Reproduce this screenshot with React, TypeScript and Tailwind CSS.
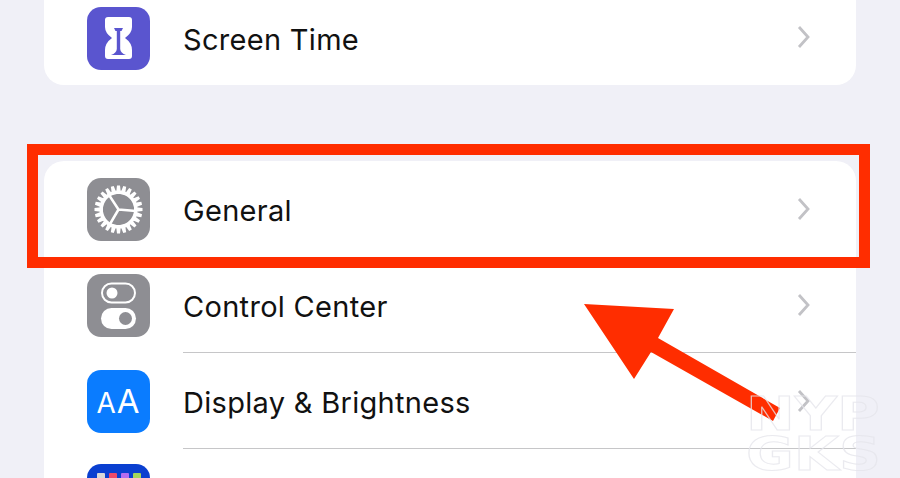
import React from "react";

function HourglassIcon() {
  return (
    <svg width="63" height="63" viewBox="0 0 63 63">
      <path d="M18 13 Q18 10 21 10 H42 Q45 10 45 13 V20 Q45 26 38 31 Q45 36 45 43 V49 Q45 52 42 52 H21 Q18 52 18 49 V43 Q18 36 25 31 Q18 26 18 20 Z" fill="#fff" />
      <path d="M27 21 H36 L34.5 24 H33.2 L33.2 42 Q33.5 46 39 48 H24 Q29.5 46 29.8 42 L29.8 24 H28.5 Z" fill="#5a55cf" />
    </svg>
  );
}

function GearIcon() {
  const teeth = Array.from({ length: 24 }, (_, i) => i * 15);
  return (
    <svg width="63" height="63" viewBox="0 0 63 63">
      {teeth.map((deg) => (
        <polygon key={deg} points="29,16 34,16 33,7.5 30,7.5" fill="#fff" transform={`rotate(${deg} 31.5 31.5)`} />
      ))}
      <circle cx="31.5" cy="31.5" r="17.5" fill="none" stroke="#fff" strokeWidth="3" />
      <path d="M31.5 31.5 L49 33 M31.5 31.5 L22 17 M31.5 31.5 L23 46" stroke="#fff" strokeWidth="2.5" fill="none" />
    </svg>
  );
}

function SwitchesIcon() {
  return (
    <svg width="63" height="63" viewBox="0 0 63 63">
      <rect x="15" y="9.5" width="33" height="19" rx="9.5" fill="none" stroke="#fff" strokeWidth="2" />
      <circle cx="25" cy="19" r="5.5" fill="#fff" />
      <rect x="14" y="34" width="35" height="21" rx="10.5" fill="#fff" />
      <circle cx="38.5" cy="44.5" r="6.5" fill="#8e8e93" />
    </svg>
  );
}

function Chevron() {
  return (
    <svg width="13" height="24" viewBox="0 0 13 24" className="shrink-0">
      <path d="M2 2 L11 12 L2 22" fill="none" stroke="#c2c2c6" strokeWidth="2.8" />
    </svg>
  );
}

function Row({ icon, tile, label, divider }: { icon: React.ReactNode; tile: string; label: string; divider?: boolean }) {
  return (
    <div className="flex h-[96px] shrink-0 items-center pl-[43px]">
      <div className={`flex h-[63px] w-[63px] shrink-0 items-center justify-center overflow-hidden rounded-[14px] ${tile}`}>{icon}</div>
      <div className={`ml-[33px] flex h-full flex-1 items-center pr-[46px] ${divider ? "border-b border-[#c6c6c8]" : ""}`}>
        <span className="flex-1 pt-[4px] text-[29px] tracking-[0.3px] text-[#111]">{label}</span>
        <Chevron />
      </div>
    </div>
  );
}

export default function App() {
  return (
    <div className="relative flex h-[478px] w-[900px] flex-col overflow-hidden bg-[#f0f0f7] px-[44px] font-['Inter',sans-serif]">
      <div className="flex h-[85px] shrink-0 items-start rounded-b-[20px] bg-white pl-[43px] pt-[7px]">
        <div className="flex h-[63px] w-[63px] shrink-0 items-center justify-center rounded-[14px] bg-[#5a55cf]">
          <HourglassIcon />
        </div>
        <div className="ml-[33px] flex h-[63px] flex-1 items-center pr-[46px]">
          <span className="flex-1 pt-[2px] text-[29px] tracking-[0.3px] text-[#111]">Screen Time</span>
          <div className="mb-[3px] flex">
            <Chevron />
          </div>
        </div>
      </div>

      <div className="mt-[76px] flex flex-1 flex-col overflow-hidden rounded-t-[20px] bg-white">
        <Row icon={<GearIcon />} tile="bg-[#8e8e93]" label="General" />
        <Row icon={<SwitchesIcon />} tile="bg-[#8e8e93]" label="Control Center" divider />
        <Row
          icon={<span className="text-[33px] leading-none tracking-[1px] text-white"><span className="text-[28px]">A</span>A</span>}
          tile="bg-[#0a7cff]"
          label="Display & Brightness"
          divider
        />
        <div className="flex pl-[43px] pt-[15px]">
          <div className="flex h-[63px] w-[63px] shrink-0 justify-center gap-[4px] rounded-[14px] bg-[#0a3fd0] pt-[9px]">
            <div className="h-[8px] w-[8px] rounded-[1px] bg-[#d8d8d8]" />
            <div className="h-[8px] w-[8px] rounded-[1px] bg-[#ee4a6a]" />
            <div className="h-[8px] w-[8px] rounded-[1px] bg-[#b56cf0]" />
            <div className="h-[8px] w-[8px] rounded-[1px] bg-[#a4d65a]" />
          </div>
        </div>
      </div>

      {/* annotation box */}
      <div className="absolute left-[27px] top-[144px] h-[124px] w-[843px] border-[11px] border-[#ff2d00]" />

      {/* arrow */}
      <svg className="absolute left-0 top-0" width="900" height="478" viewBox="0 0 900 478">
        <polygon points="584,304 674,309 658,338 780,408 773,421 651,352 634,379" fill="#ff2d00" />
      </svg>

      {/* watermark */}
      <div className="absolute left-[746px] top-[394px] w-[112px] origin-left scale-x-[1.24] whitespace-nowrap font-['DejaVu_Sans',sans-serif] text-[47px] font-bold leading-[40px] text-transparent opacity-80 [-webkit-text-stroke:1px_#e6e6ec]">
        NYP
        <br />
        GKS
      </div>
    </div>
  );
}
